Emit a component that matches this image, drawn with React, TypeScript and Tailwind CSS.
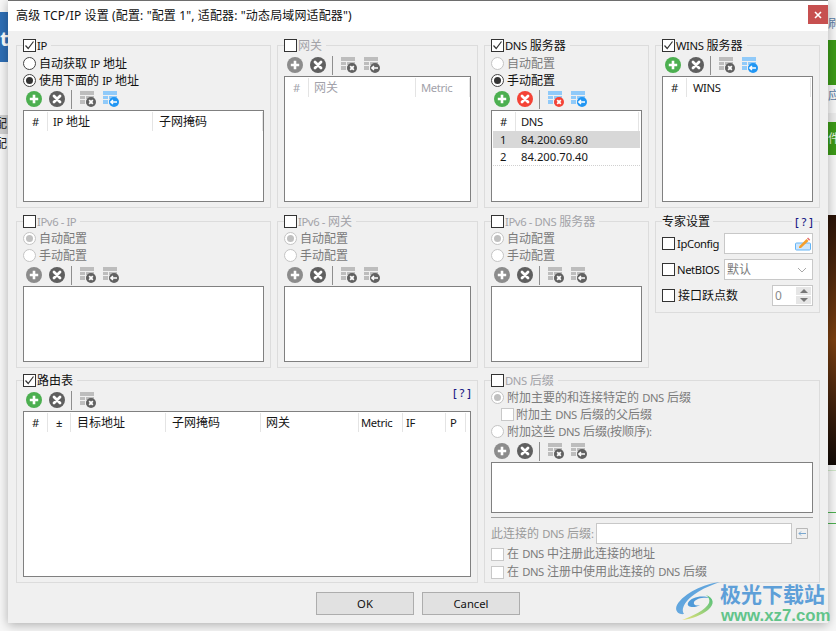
import React from 'react';

type Col = { label: string; cls: string; muted?: boolean };

// latin runs sit slightly smaller than the cjk ones, like the tahoma/simsun mix in the dialog
const Tx: React.FC<{ s: string }> = ({ s }) => (
  <>
    {s.split(/([\x21-\x7e±]+(?: [\x21-\x7e]+)*)/).map((part, i) =>
      i % 2 ? <span key={i} className="text-[11.25px] tracking-[-0.4px]">{part}</span> : part
    )}
  </>
);

const Checkbox: React.FC<{ checked?: boolean; dim?: boolean }> = ({ checked, dim }) => (
  <span className={`relative block h-[13px] w-[13px] shrink-0 border bg-white ${dim ? 'border-[#c8c8c8]' : 'border-[#333333]'}`}>
    {checked && (
      <svg viewBox="0 0 13 13" className="absolute -left-px -top-px h-[13px] w-[13px]" fill="none" stroke="#333" strokeWidth="1.2">
        <path d="M2.5 6.5 5.2 9.5 10.5 2.5" />
      </svg>
    )}
  </span>
);

const Radio: React.FC<{ label: string; on?: boolean; dim?: boolean }> = ({ label, on, dim }) => (
  <div className={`flex h-[17px] shrink-0 items-center gap-[3px] whitespace-pre ${dim ? 'text-[#7b7b7b]' : 'text-[#111111]'}`}>
    <span className={`flex h-[13px] w-[13px] shrink-0 items-center justify-center rounded-full border bg-white ${dim ? 'border-[#c4c4c4]' : 'border-[#444444]'}`}>
      {on && <span className={`h-[7px] w-[7px] rounded-full ${dim ? 'bg-[#c0c0c0]' : 'bg-[#333333]'}`} />}
    </span>
    <span><Tx s={label} /></span>
  </div>
);

const Legend: React.FC<{ label: string; checked?: boolean; dim?: boolean }> = ({ label, checked, dim }) => (
  <div className="-mt-[9px] flex h-[17px] w-fit shrink-0 items-center gap-px bg-[#f0f0f0] pr-[4px]">
    <Checkbox checked={checked} />
    <span className={dim ? 'text-[#a3a3a8]' : 'text-[#111111]'}><Tx s={label} /></span>
  </div>
);

const Round: React.FC<{ color: string; plus?: boolean }> = ({ color, plus }) => (
  <svg viewBox="0 0 16 16" className="h-4 w-4 shrink-0">
    <circle cx="8" cy="8" r="8" fill={color} />
    {plus ? (
      <path d="M8 3.8v8.4M3.8 8h8.4" stroke="#fff" strokeWidth="2.6" />
    ) : (
      <path d="M5 5l6 6M11 5l-6 6" stroke="#fff" strokeWidth="2.8" strokeLinecap="round" />
    )}
  </svg>
);

const TableIcon: React.FC<{ tint: string; badge: string; arrow?: boolean }> = ({ tint, badge, arrow }) => (
  <svg viewBox="0 0 16 16" className="h-4 w-4 shrink-0">
    <path d="M0 0h14v4H0zM0 5h5v3H0zM6 5h8v3H6zM0 9h5v4H0zM6 9h8v4H6z" fill={tint} />
    <circle cx="11" cy="11" r="5" fill={badge} />
    {arrow ? (
      <path d="M7.8 11h6.2M10 9l-2.2 2 2.2 2" fill="none" stroke="#fff" strokeWidth="1.4" />
    ) : (
      <path d="M9.2 9.2l3.6 3.6M12.8 9.2l-3.6 3.6" stroke="#fff" strokeWidth="1.8" />
    )}
  </svg>
);

const GRAY = '#bdbdbd';
const BLUE = '#90caf9';

const Toolbar: React.FC<{
  addColor?: string;
  delColor?: string;
  first?: [string, string];
  second?: [string, string] | null;
  children?: React.ReactNode;
}> = ({ addColor = '#8c8c8c', delColor = '#5f5f5f', first = [GRAY, '#616161'], second = [GRAY, '#616161'], children }) => (
  <div className="flex h-[22px] shrink-0 items-center pl-[3px]">
    <Round color={addColor} plus />
    <span className="ml-[7px]"><Round color={delColor} /></span>
    <span className="ml-[6px] mr-[8px] h-[19px] w-px bg-[#8e8e8e]" />
    <TableIcon tint={first[0]} badge={first[1]} />
    {second && (
      <span className="ml-[7px]"><TableIcon tint={second[0]} badge={second[1]} arrow /></span>
    )}
    {children}
  </div>
);

const ListHead: React.FC<{ cols: Col[] }> = ({ cols }) => (
  <div className="mt-px flex h-[19px] shrink-0">
    {cols.map((c) => (
      <div
        key={c.label}
        className={`flex items-center whitespace-pre border-r border-[#e4e4e4] pt-px ${c.cls} ${c.muted ? 'text-[#a2a2aa]' : 'text-[#161616]'}`}
      >
        <span><Tx s={c.label} /></span>
      </div>
    ))}
  </div>
);

const ListBox: React.FC<{ className?: string; children?: React.ReactNode }> = ({ className = 'min-h-0 flex-1', children }) => (
  <div className={`border border-[#808080] bg-white ${className}`}>{children}</div>
);

const Group: React.FC<{ className?: string; children: React.ReactNode }> = ({ className = 'pb-[5px]', children }) => (
  <section className={`flex min-w-0 flex-col border border-[#dcdcdc] px-[6px] ${className}`}>{children}</section>
);

const V6Group: React.FC<{ title: string }> = ({ title }) => (
  <Group className="mt-px pb-[5px]">
    <Legend label={title} dim />
    <Radio label="自动配置" on dim />
    <Radio label="手动配置" dim />
    <Toolbar />
    <ListBox />
  </Group>
);

const DimCheck: React.FC<{ label: string }> = ({ label }) => (
  <div className="flex h-[18px] items-center gap-[3px] whitespace-pre text-[#7b7b7b]">
    <Checkbox dim />
    <span><Tx s={label} /></span>
  </div>
);

const Help: React.FC<{ className?: string }> = ({ className = '' }) => (
  <span className={`whitespace-pre text-[11px] font-medium text-[#1b1b86] ${className}`}>[ ? ]</span>
);

const Expert: React.FC = () => (
  <Group className="mt-px h-[92px] self-start pb-[5px]">
    <div className="-mt-[9px] flex h-[17px] items-center justify-between">
      <span className="bg-[#f0f0f0] pr-[3px] text-[#111111]">专家设置</span>
      <Help className="bg-[#f0f0f0] pl-[3px]" />
    </div>
    <div className="mt-[3px] flex flex-col gap-[5px]">
      <div className="flex h-[21px] items-center">
        <Checkbox />
        <span className="ml-[2px] w-[47px] text-[11.25px] tracking-[-0.4px] text-[#111111]">IpConfig</span>
        <div className="flex h-[21px] flex-1 items-center justify-end border border-[#c8c8c8] bg-white pr-[1px]">
          <svg viewBox="0 0 16 14" className="h-[14px] w-4">
            <rect x="0.5" y="6" width="15" height="7" rx="1" fill="#cfe6fb" stroke="#64b5f6" />
            <path d="M4 9.5 11.5 2l2 2L6 11H4z" fill="#f59e2b" />
            <path d="M12.5 1l2.2 2.2" stroke="#e57373" strokeWidth="1.6" />
          </svg>
        </div>
      </div>
      <div className="flex h-[21px] items-center">
        <Checkbox />
        <span className="ml-[2px] w-[47px] text-[11.25px] tracking-[-0.4px] text-[#111111]">NetBIOS</span>
        <div className="flex h-[21px] flex-1 items-center justify-between border border-[#c8c8c8] bg-white pl-[2px] pr-[5px] text-[#7b7b7b]">
          默认
          <svg viewBox="0 0 10 6" className="h-[6px] w-[10px]" fill="none" stroke="#a8a8a8">
            <path d="M1 1l4 4 4-4" />
          </svg>
        </div>
      </div>
      <div className="flex h-[21px] items-center">
        <Checkbox />
        <span className="ml-[3px] flex-1 text-[#111111]">接口跃点数</span>
        <div className="flex h-[21px] w-[41px] items-center justify-between border border-[#c8c8c8] bg-white pl-[2px] pr-px text-[#8a8a8a]">
          0
          <div className="flex w-[15px] flex-col gap-px">
            <span className="flex h-[8px] items-center justify-center bg-[#e6e6e6]">
              <span className="h-0 w-0 border-x-[4px] border-b-[4px] border-x-transparent border-b-[#777777]" />
            </span>
            <span className="flex h-[8px] items-center justify-center bg-[#e6e6e6]">
              <span className="h-0 w-0 border-x-[4px] border-t-[4px] border-x-transparent border-t-[#777777]" />
            </span>
          </div>
        </div>
      </div>
    </div>
  </Group>
);

const Backdrop: React.FC = () => (
  <>
    <div className="absolute left-0 top-[12px] h-[50px] w-[8px] bg-[#2f6fb5]" />
    <div className="absolute left-0 top-[30px] text-[20px] font-bold leading-[17px] text-white">t</div>
    <div className="absolute left-0 top-[115px] h-[19px] w-[8px] bg-[#d0d0d0]" />
    <div className="absolute -left-[5px] top-[116px] text-[#222222]">配</div>
    <div className="absolute -left-[5px] top-[136px] text-[#222222]">配</div>
    <div className="absolute left-[828px] top-[16px] text-[#5a7ea8]">刷</div>
    <div className="absolute right-0 top-[40px] h-[45px] w-[8px] bg-[#3c9a18]" />
    <div className="absolute left-[828px] top-[88px] text-[#5a7ea8]">应</div>
    <div className="absolute right-0 top-[113px] h-[9px] w-[8px] bg-[#ececec]" />
    <div className="absolute right-0 top-[122px] h-[33px] w-[8px] bg-[#3c9a18]" />
    <div className="absolute left-[828px] top-[131px] text-[#e8f5e0]">件</div>
    <div className="absolute right-0 top-[215px] h-[250px] w-[8px] bg-gradient-to-b from-[#2a1408] via-[#7a3f10] to-[#120a06]" />
    <div className="absolute right-0 top-[470px] h-px w-[8px] bg-[#cfe6c8]" />
    <div className="absolute right-0 top-[512px] h-px w-[8px] bg-[#4caf50]" />
    <div className="absolute right-0 top-[523px] h-px w-[8px] bg-[#4caf50]" />
  </>
);

const Watermark: React.FC = () => (
  <>
    <svg viewBox="0 0 46 40" className="absolute left-[676px] top-[581px] h-[40px] w-[46px]">
      <defs>
        <linearGradient id="wm-a" x1="0" y1="0" x2="1" y2="1">
          <stop offset="0" stopColor="#4f9ad8" />
          <stop offset="1" stopColor="#7db7e6" />
        </linearGradient>
        <linearGradient id="wm-b" x1="0" y1="1" x2="1" y2="0">
          <stop offset="0" stopColor="#e8e27a" />
          <stop offset="1" stopColor="#4fbf7a" />
        </linearGradient>
      </defs>
      <path d="M44 1C28 3 8 12 1 24c-3 6 2 10 7 9C4 28 10 18 22 11 30 6 38 3 44 1z" fill="url(#wm-a)" />
      <path d="M12 22c3-6 14-8 22-5-6-1-14 0-16 4-1 3 2 4 6 3-4 3-14 3-12-2z" fill="#4f9ad8" />
      <path d="M30 14c8 3 9 9 2 15-6 5-16 9-26 10 10-4 24-10 27-17 1-3 0-6-3-8z" fill="url(#wm-b)" />
    </svg>
    <div className="absolute left-[720px] top-[582px] font-['Noto_Sans_CJK_SC',sans-serif] text-[21px] font-bold leading-[22px] text-[#5e9fd8]">极光下载站</div>
    <div className="absolute left-[721px] top-[606px] font-['Liberation_Sans',sans-serif] text-[16.8px] font-bold leading-[19px] text-[#62c48a]">www.xz7.com</div>
  </>
);

export default function App() {
  return (
    <div className="relative h-[631px] w-[836px] overflow-hidden bg-[#f7f7f7] font-['Noto_Sans','Noto_Sans_CJK_SC',sans-serif] text-[12px] leading-[16px]">
      <Backdrop />
      {/* dialog window */}
      <div className="absolute left-[8px] top-0 flex h-[623px] w-[820px] flex-col bg-[#f0f0f0] shadow-[0_2px_10px_rgba(0,0,0,0.3)]">
        <div className="flex h-[31px] shrink-0 items-center justify-between border-t border-[#6e6e6e] bg-white pl-[8px]">
          <span className="whitespace-pre tracking-[0.13px] text-[#111111]">高级 TCP/IP 设置 (配置: "配置 1", 适配器: "动态局域网适配器")</span>
          <button className="mb-[3px] flex h-[19px] w-[20px] items-center justify-center bg-[#c75050]">
            <svg viewBox="0 0 8 8" className="h-2 w-2" stroke="#fff" strokeWidth="1.6">
              <path d="M1 1l6 6M7 1 1 7" />
            </svg>
          </button>
        </div>

        <div className="grid grid-cols-[255px_201px_165px_165px] grid-rows-[163px_148px_203px] gap-x-[6px] gap-y-[12px] px-[8px] pt-[14px]">
          <Group>
            <Legend label="IP" checked />
            <div className="-mb-px mt-px">
              <Radio label="自动获取 IP 地址" />
              <Radio label="使用下面的 IP 地址" on />
            </div>
            <Toolbar addColor="#4caf50" second={[BLUE, '#2196f3']} />
            <ListBox>
              <ListHead
                cols={[
                  { label: '#', cls: 'w-[24px] justify-center' },
                  { label: 'IP 地址', cls: 'w-[105px] pl-[5px]' },
                  { label: '子网掩码', cls: 'w-[110px] pl-[6px]' },
                ]}
              />
            </ListBox>
          </Group>

          <Group>
            <Legend label="网关" dim />
            <Toolbar />
            <ListBox>
              <ListHead
                cols={[
                  { label: '#', cls: 'w-[24px] justify-center', muted: true },
                  { label: '网关', cls: 'w-[107px] pl-[5px]', muted: true },
                  { label: 'Metric', cls: 'w-[54px] pl-[5px]', muted: true },
                ]}
              />
            </ListBox>
          </Group>

          <Group>
            <Legend label="DNS 服务器" checked />
            <div className="-mb-px mt-px">
              <Radio label="自动配置" dim />
              <Radio label="手动配置" on />
            </div>
            <Toolbar addColor="#4caf50" delColor="#f44336" first={[BLUE, '#f44336']} second={[BLUE, '#2196f3']} />
            <ListBox>
              <ListHead
                cols={[
                  { label: '#', cls: 'w-[24px] justify-center' },
                  { label: 'DNS', cls: 'w-[123px] pl-[5px]' },
                ]}
              />
              <div className="ml-px mr-[1px] flex h-[17px] items-center bg-[#d8d8d8] text-[11.25px] text-[#161616]">
                <span className="w-[28px] pl-[7px]">1</span>84.200.69.80
              </div>
              <div className="ml-px mr-[1px] flex h-[18px] items-center border-b border-dotted border-[#d0d0d0] text-[11.25px] text-[#161616]">
                <span className="w-[28px] pl-[7px]">2</span>84.200.70.40
              </div>
            </ListBox>
          </Group>

          <Group>
            <Legend label="WINS 服务器" checked />
            <Toolbar addColor="#4caf50" second={[BLUE, '#2196f3']} />
            <ListBox>
              <ListHead
                cols={[
                  { label: '#', cls: 'w-[24px] justify-center' },
                  { label: 'WINS', cls: 'w-[124px] pl-[6px]' },
                ]}
              />
            </ListBox>
          </Group>

          <V6Group title="IPv6 - IP" />
          <V6Group title="IPv6 - 网关" />
          <V6Group title="IPv6 - DNS 服务器" />
          <Expert />

          <Group className="col-span-2 pb-[5px]">
            <Legend label="路由表" checked />
            <Toolbar addColor="#4caf50" second={null}>
              <Help className="-mt-[14px] ml-auto" />
            </Toolbar>
            <ListBox>
              <ListHead
                cols={[
                  { label: '#', cls: 'w-[24px] justify-center' },
                  { label: '±', cls: 'w-[23px] justify-center' },
                  { label: '目标地址', cls: 'w-[95px] pl-[6px]' },
                  { label: '子网掩码', cls: 'w-[95px] pl-[6px]' },
                  { label: '网关', cls: 'w-[98px] pl-[5px]' },
                  { label: 'Metric', cls: 'w-[44px] pl-[2px]' },
                  { label: 'IF', cls: 'w-[43px] pl-[3px]' },
                  { label: 'P', cls: 'w-[20px] pl-[4px]' },
                ]}
              />
            </ListBox>
          </Group>

          <Group className="col-span-2">
            <Legend label="DNS 后缀" dim />
            <Radio label="附加主要的和连接特定的 DNS 后缀" on dim />
            <div className="flex h-[17px] shrink-0 items-center gap-[2px] whitespace-pre pl-[10px] text-[#7b7b7b]">
              <Checkbox dim />
              <span><Tx s="附加主 DNS 后缀的父后缀" /></span>
            </div>
            <Radio label="附加这些 DNS 后缀(按顺序):" dim />
            <Toolbar />
            <ListBox className="h-[51px] shrink-0" />
            <div className="mt-[4px] h-px shrink-0 bg-[#a0a0a0]" />
            <div className="mt-[5px] flex h-[21px] shrink-0 items-center text-[#9a9a9a]">
              <span className="w-[105px] whitespace-pre"><Tx s="此连接的 DNS 后缀:" /></span>
              <div className="h-[21px] w-[196px] border border-[#c8c8c8] bg-white" />
              <svg viewBox="0 0 12 11" className="ml-[4px] h-[11px] w-[12px]" fill="none" stroke="#7aa7cf">
                <path d="M0.5 0.5h11v10h-11z" stroke="#b8b8b8" />
                <path d="M10 5.5H3M5 3.5l-2 2 2 2" />
              </svg>
            </div>
            <div className="mt-px">
              <DimCheck label="在 DNS 中注册此连接的地址" />
              <DimCheck label="在 DNS 注册中使用此连接的 DNS 后缀" />
            </div>
          </Group>
        </div>

        <div className="mt-[9px] flex justify-center gap-[8px]">
          <button className="h-[23px] w-[98px] border border-[#adadad] bg-[#e1e1e1] text-[11.25px] text-[#111111]">OK</button>
          <button className="h-[23px] w-[98px] border border-[#adadad] bg-[#e1e1e1] text-[11.25px] text-[#111111]">Cancel</button>
        </div>
      </div>
      <Watermark />
    </div>
  );
}
